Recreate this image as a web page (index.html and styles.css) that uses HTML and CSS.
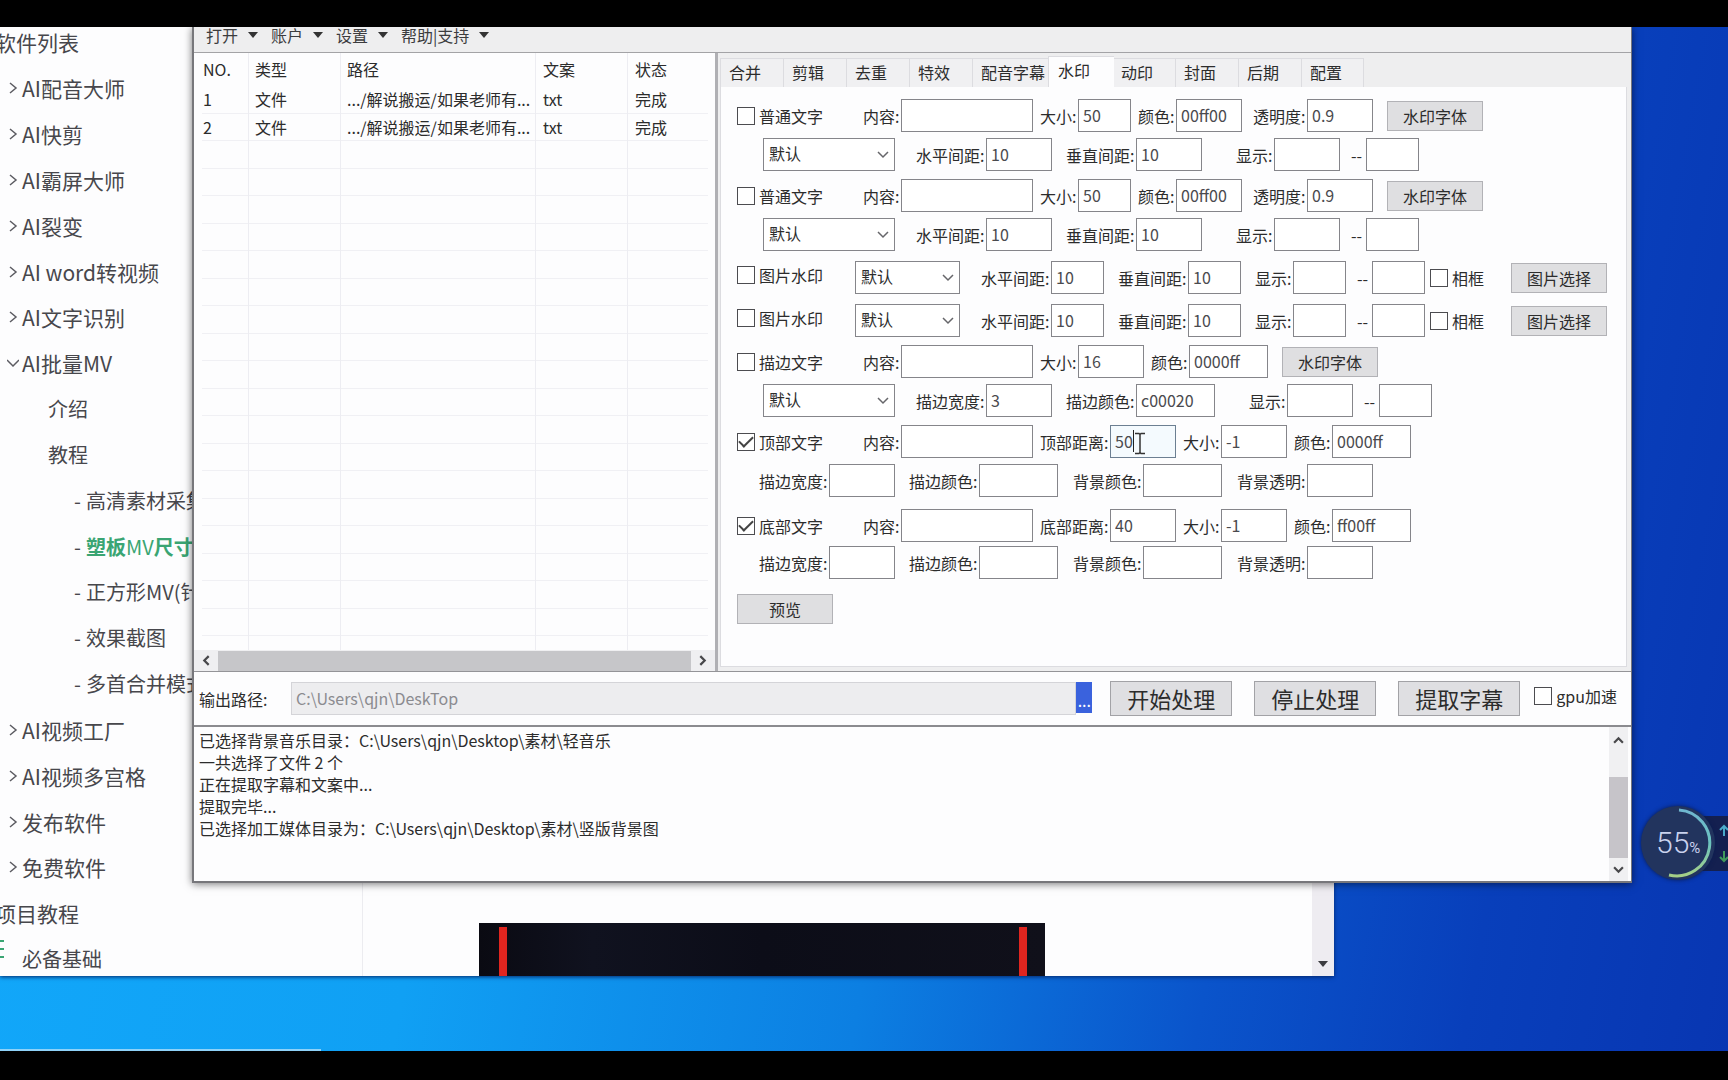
FILE: index.html
```html
<!DOCTYPE html>
<html lang="zh-CN">
<head>
<meta charset="utf-8">
<title>AI批量MV</title>
<link rel="stylesheet" href="styles.css">
</head>
<body>
<main class="desktop">

  <section class="browser">
    <nav class="sidebar">
      <ul class="tree">
        <li class="head first">软件列表</li>
        <li class="group"><svg class="chev" viewBox="0 0 12 12"><path d="M3 1l6 5-6 5"/></svg><a href="#">AI配音大师</a></li>
        <li class="group"><svg class="chev" viewBox="0 0 12 12"><path d="M3 1l6 5-6 5"/></svg><a href="#">AI快剪</a></li>
        <li class="group"><svg class="chev" viewBox="0 0 12 12"><path d="M3 1l6 5-6 5"/></svg><a href="#">AI霸屏大师</a></li>
        <li class="group"><svg class="chev" viewBox="0 0 12 12"><path d="M3 1l6 5-6 5"/></svg><a href="#">AI裂变</a></li>
        <li class="group"><svg class="chev" viewBox="0 0 12 12"><path d="M3 1l6 5-6 5"/></svg><a href="#">AI word转视频</a></li>
        <li class="group"><svg class="chev" viewBox="0 0 12 12"><path d="M3 1l6 5-6 5"/></svg><a href="#">AI文字识别</a></li>
        <li class="group"><svg class="chev" viewBox="0 0 12 12"><path d="M0 3l6 6 6-6"/></svg><a href="#">AI批量MV</a></li>
        <li class="sub"><a href="#">介绍</a></li>
        <li class="sub"><a href="#">教程</a></li>
        <li class="leaf">-<a href="#">高清素材采集</a></li>
        <li class="leaf current">-<a href="#">塑板<span>MV</span>尺寸</a></li>
        <li class="leaf">-<a href="#">正方形MV(针对</a></li>
        <li class="leaf">-<a href="#">效果截图</a></li>
        <li class="leaf">-<a href="#">多首合并模式</a></li>
        <li class="group"><svg class="chev" viewBox="0 0 12 12"><path d="M3 1l6 5-6 5"/></svg><a href="#">AI视频工厂</a></li>
        <li class="group"><svg class="chev" viewBox="0 0 12 12"><path d="M3 1l6 5-6 5"/></svg><a href="#">AI视频多宫格</a></li>
        <li class="group"><svg class="chev" viewBox="0 0 12 12"><path d="M3 1l6 5-6 5"/></svg><a href="#">发布软件</a></li>
        <li class="group"><svg class="chev" viewBox="0 0 12 12"><path d="M3 1l6 5-6 5"/></svg><a href="#">免费软件</a></li>
        <li class="head">项目教程</li>
        <li class="basics"><svg class="bars" viewBox="0 0 4 20"><path d="M0 2h4M0 10h4M0 18h4"/></svg><a href="#">必备基础</a></li>
      </ul>
    </nav>
    <div class="article"><div class="video"></div></div>
    <div class="page-scroll"><svg viewBox="0 0 10 6"><path d="M0 0h10L5 6z"/></svg></div>
  </section>

  <section class="app">
    <header class="menu">
      <button type="button">打开<i></i></button>
      <button type="button">账户<i></i></button>
      <button type="button">设置<i></i></button>
      <button type="button">帮助|支持<i></i></button>
    </header>

    <div class="work">
      <div class="files">
        <div class="files-body">
          <table>
            <colgroup><col class="c-no"><col class="c-type"><col class="c-path"><col class="c-text"><col></colgroup>
            <thead><tr><th>NO.</th><th>类型</th><th>路径</th><th>文案</th><th>状态</th></tr></thead>
            <tbody>
              <tr><td>1</td><td>文件</td><td>.../解说搬运/如果老师有...</td><td>txt</td><td>完成</td></tr>
              <tr><td>2</td><td>文件</td><td>.../解说搬运/如果老师有...</td><td>txt</td><td>完成</td></tr>
            </tbody>
          </table>
        </div>
        <div class="hscroll">
          <svg viewBox="0 0 10 10"><path d="M7 1L3 5l4 4"/></svg>
          <div class="thumb"></div>
          <svg viewBox="0 0 10 10"><path d="M3 1l4 4-4 4"/></svg>
        </div>
      </div>

      <div class="settings">
        <div class="tabs" role="tablist">
          <button type="button" role="tab">合并</button>
          <button type="button" role="tab">剪辑</button>
          <button type="button" role="tab">去重</button>
          <button type="button" role="tab">特效</button>
          <button type="button" role="tab" class="wide">配音字幕</button>
          <button type="button" role="tab" class="active" aria-selected="true">水印</button>
          <button type="button" role="tab">动印</button>
          <button type="button" role="tab">封面</button>
          <button type="button" role="tab">后期</button>
          <button type="button" role="tab">配置</button>
        </div>

        <form class="panel">
          <div class="block">
            <div class="row">
              <label class="check name"><input type="checkbox"><span>普通文字</span></label>
              <label class="field n2"><span>内容:</span><input class="w132" type="text"></label>
              <label class="field n2 g7"><span>大小:</span><input class="w53" type="text" value="50"></label>
              <label class="field n2 g7"><span>颜色:</span><input class="w66" type="text" value="00ff00"></label>
              <label class="field n3 g11"><span>透明度:</span><input class="w66" type="text" value="0.9"></label>
              <button class="btn g14" type="button">水印字体</button>
            </div>
            <div class="row in26">
              <span class="select w132"><select aria-label="位置"><option>默认</option></select><svg viewBox="0 0 12 8"><path d="M1 1l5 5 5-5"/></svg></span>
              <label class="field n4 g21"><span>水平间距:</span><input class="w66" type="text" value="10"></label>
              <label class="field n4 g14"><span>垂直间距:</span><input class="w66" type="text" value="10"></label>
              <label class="field n2 g34"><span>显示:</span><input class="w66" type="text"></label>
              <label class="field to"><span>--</span><input class="w53" type="text"></label>
            </div>
          </div>

          <div class="block">
            <div class="row">
              <label class="check name"><input type="checkbox"><span>普通文字</span></label>
              <label class="field n2"><span>内容:</span><input class="w132" type="text"></label>
              <label class="field n2 g7"><span>大小:</span><input class="w53" type="text" value="50"></label>
              <label class="field n2 g7"><span>颜色:</span><input class="w66" type="text" value="00ff00"></label>
              <label class="field n3 g11"><span>透明度:</span><input class="w66" type="text" value="0.9"></label>
              <button class="btn g14" type="button">水印字体</button>
            </div>
            <div class="row in26">
              <span class="select w132"><select aria-label="位置"><option>默认</option></select><svg viewBox="0 0 12 8"><path d="M1 1l5 5 5-5"/></svg></span>
              <label class="field n4 g21"><span>水平间距:</span><input class="w66" type="text" value="10"></label>
              <label class="field n4 g14"><span>垂直间距:</span><input class="w66" type="text" value="10"></label>
              <label class="field n2 g34"><span>显示:</span><input class="w66" type="text"></label>
              <label class="field to"><span>--</span><input class="w53" type="text"></label>
            </div>
          </div>

          <div class="block images">
            <div class="row">
              <label class="check name"><input type="checkbox"><span>图片水印</span></label>
              <span class="select w105"><select aria-label="位置"><option>默认</option></select><svg viewBox="0 0 12 8"><path d="M1 1l5 5 5-5"/></svg></span>
              <label class="field n4 g21"><span>水平间距:</span><input class="w53" type="text" value="10"></label>
              <label class="field n4 g14"><span>垂直间距:</span><input class="w53" type="text" value="10"></label>
              <label class="field n2 g14"><span>显示:</span><input class="w53" type="text"></label>
              <label class="field to"><span>--</span><input class="w53" type="text"></label>
              <label class="check g5"><input type="checkbox"><span>相框</span></label>
              <button class="btn g27" type="button">图片选择</button>
            </div>
            <div class="row">
              <label class="check name"><input type="checkbox"><span>图片水印</span></label>
              <span class="select w105"><select aria-label="位置"><option>默认</option></select><svg viewBox="0 0 12 8"><path d="M1 1l5 5 5-5"/></svg></span>
              <label class="field n4 g21"><span>水平间距:</span><input class="w53" type="text" value="10"></label>
              <label class="field n4 g14"><span>垂直间距:</span><input class="w53" type="text" value="10"></label>
              <label class="field n2 g14"><span>显示:</span><input class="w53" type="text"></label>
              <label class="field to"><span>--</span><input class="w53" type="text"></label>
              <label class="check g5"><input type="checkbox"><span>相框</span></label>
              <button class="btn g27" type="button">图片选择</button>
            </div>
          </div>

          <div class="block">
            <div class="row">
              <label class="check name"><input type="checkbox"><span>描边文字</span></label>
              <label class="field n2"><span>内容:</span><input class="w132" type="text"></label>
              <label class="field n2 g7"><span>大小:</span><input class="w66" type="text" value="16"></label>
              <label class="field n2 g7"><span>颜色:</span><input class="w79" type="text" value="0000ff"></label>
              <button class="btn g14" type="button">水印字体</button>
            </div>
            <div class="row in26">
              <span class="select w132"><select aria-label="位置"><option>默认</option></select><svg viewBox="0 0 12 8"><path d="M1 1l5 5 5-5"/></svg></span>
              <label class="field n4 g21"><span>描边宽度:</span><input class="w66" type="text" value="3"></label>
              <label class="field n4 g14"><span>描边颜色:</span><input class="w79" type="text" value="c00020"></label>
              <label class="field n2 g34"><span>显示:</span><input class="w66" type="text"></label>
              <label class="field to"><span>--</span><input class="w53" type="text"></label>
            </div>
          </div>

          <div class="block">
            <div class="row">
              <label class="check name"><input type="checkbox" checked><span>顶部文字</span></label>
              <label class="field n2"><span>内容:</span><input class="w132" type="text"></label>
              <label class="field n4 g7 editing"><span>顶部距离:</span><input class="w66" type="text" value="50"><i class="caret"></i><svg class="ibeam" viewBox="0 0 12 22"><path d="M1 1h4l1 1 1-1h4M6 2v18M1 21h4l1-1 1 1h4"/></svg></label>
              <label class="field n2 g7"><span>大小:</span><input class="w66" type="text" value="-1"></label>
              <label class="field n2 g7"><span>颜色:</span><input class="w79" type="text" value="0000ff"></label>
            </div>
            <div class="row in22">
              <label class="field n4"><span>描边宽度:</span><input class="w66" type="text"></label>
              <label class="field n4 g14"><span>描边颜色:</span><input class="w79" type="text"></label>
              <label class="field n4 g15"><span>背景颜色:</span><input class="w79" type="text"></label>
              <label class="field n4 g15"><span>背景透明:</span><input class="w66" type="text"></label>
            </div>
          </div>

          <div class="block bottom">
            <div class="row">
              <label class="check name"><input type="checkbox" checked><span>底部文字</span></label>
              <label class="field n2"><span>内容:</span><input class="w132" type="text"></label>
              <label class="field n4 g7"><span>底部距离:</span><input class="w66" type="text" value="40"></label>
              <label class="field n2 g7"><span>大小:</span><input class="w66" type="text" value="-1"></label>
              <label class="field n2 g7"><span>颜色:</span><input class="w79" type="text" value="ff00ff"></label>
            </div>
            <div class="row in22">
              <label class="field n4"><span>描边宽度:</span><input class="w66" type="text"></label>
              <label class="field n4 g14"><span>描边颜色:</span><input class="w79" type="text"></label>
              <label class="field n4 g15"><span>背景颜色:</span><input class="w79" type="text"></label>
              <label class="field n4 g15"><span>背景透明:</span><input class="w66" type="text"></label>
            </div>
          </div>

          <button class="btn preview" type="button">预览</button>
        </form>
      </div>
    </div>

    <div class="output">
      <label for="out">输出路径:</label>
      <input id="out" type="text" value="C:\Users\qjn\DeskTop" disabled>
      <button class="browse" type="button">...</button>
      <button class="action" type="button">开始处理</button>
      <button class="action" type="button">停止处理</button>
      <button class="action" type="button">提取字幕</button>
      <label class="check"><input type="checkbox"><span>gpu加速</span></label>
    </div>

    <div class="log">
      <div class="lines" role="log">
        <p>已选择背景音乐目录：C:\Users\qjn\Desktop\素材\轻音乐</p>
        <p>一共选择了文件 2 个</p>
        <p>正在提取字幕和文案中...</p>
        <p>提取完毕...</p>
        <p>已选择加工媒体目录为：C:\Users\qjn\Desktop\素材\竖版背景图</p>
      </div>
      <div class="vscroll">
        <svg viewBox="0 0 10 10"><path d="M1 7l4-4 4 4"/></svg>
        <div class="thumb"></div>
        <svg viewBox="0 0 10 10"><path d="M1 3l4 4 4-4"/></svg>
      </div>
    </div>
  </section>

  <aside class="meter">
    <div class="net">
      <svg viewBox="0 0 10 12"><path d="M5 12V2M1 6l4-4 4 4" stroke="#49a9c9"/></svg>
      <svg viewBox="0 0 10 12"><path d="M5 0v10M1 6l4 4 4-4" stroke="#3f9a5c"/></svg>
    </div>
    <div class="dial">
      <svg viewBox="0 0 74 74">
        <defs><linearGradient id="arc" x1="0" y1="0" x2="0" y2="1"><stop offset="0" stop-color="#6fb6d0"/><stop offset=".5" stop-color="#6cc3bf"/><stop offset="1" stop-color="#a5cf86"/></linearGradient></defs>
        <path d="M38 4A33 33 0 1 1 28 69" fill="none" stroke="url(#arc)" stroke-width="3"/>
      </svg>
      <span>55<small>%</small></span>
    </div>
  </aside>

  <div class="task-line"></div>
</main>
</body>
</html>
```
FILE: styles.css
```css
* { box-sizing: border-box; }

body {
  margin: 0;
  min-height: 100vh;
  padding: 27px 0 29px;
  display: flex;
  background: #000;
  color: #2c2c2c;
  font: 16px/22px "Noto Sans CJK SC", sans-serif;
}

button, input, select { font: inherit; color: inherit; margin: 0; border-radius: 0; }
button { cursor: default; }
a { color: inherit; text-decoration: none; }
svg { display: block; fill: none; flex: none; }

.desktop {
  position: relative;
  flex: 1;
  overflow: hidden;
  background: linear-gradient(100deg, #12a9fb 0%, #10a0f4 30%, #0c7fe2 54%, #0a54cb 72%, #083fbb 86%, #0836b2 100%);
}

/* Browser window behind the tool */
.browser {
  position: absolute;
  inset: 0 394px 75px 0;
  display: flex;
  overflow: hidden;
  background: #fdfdfe;
  box-shadow: 0 1px 4px #04286a;
}
.sidebar { width: 363px; border-right: 1px solid #ececf0; overflow: hidden; }
.tree { list-style: none; margin: 0; padding: 0; color: #47474c; }
.tree li { display: flex; align-items: center; height: 46px; white-space: nowrap; font-size: 20px; }
.tree li:nth-child(6n) { height: 45px; }
.tree .head { font-size: 21px; text-indent: -5px; }
.tree .first { height: 38px; padding-bottom: 8px; }
.tree .group { font-size: 21px; padding-left: 7px; gap: 3px; }
.chev { width: 12px; height: 12px; stroke: #5c5c62; stroke-width: 1.5; }
.tree .sub { padding-left: 48px; }
.tree .leaf { padding-left: 74px; gap: 5px; }
.tree .current a { color: #3aa573; font-weight: 700; }
.tree .current span { font-weight: 400; }
.tree .basics { gap: 18px; }
.bars { width: 4px; height: 20px; margin-bottom: 20px; stroke: #3aa573; stroke-width: 2; }

.article { flex: 1; display: flex; align-items: flex-end; }
.video {
  width: 566px;
  height: 53px;
  margin-left: 116px;
  background:
    linear-gradient(#e0251f, #e0251f) 20px 4px / 8px 50px no-repeat,
    linear-gradient(#e0251f, #e0251f) 540px 4px / 8px 50px no-repeat,
    linear-gradient(90deg, #0a0a12, #10121f 20%, #0c0d18 50%, #10101a);
}
.page-scroll { width: 22px; background: #eeecf1; display: flex; align-items: flex-end; justify-content: center; padding-bottom: 9px; }
.page-scroll svg { width: 10px; height: 6px; fill: #3c3c40; }

/* Tool window */
.app {
  position: absolute;
  inset: 0 96px auto 192px;
  background: #fdfdfe;
  border: solid #77777b;
  border-width: 0 1px 2px 2px;
  box-shadow: 0 1px 8px #0008;
}
.menu { display: flex; align-items: center; gap: 12px; height: 26px; padding: 0 0 10px 12px; background: #eeeeef; border-bottom: 1px solid #a3a3a6; }
.menu button { display: flex; align-items: center; gap: 10px; padding: 0; border: 0; background: none; color: #3c3c3e; }
.menu i { border: 5px solid transparent; border-top: 6px solid #333; border-bottom: 0; margin-right: 1px; }

.work { display: flex; border-bottom: 1px solid #949498; }
.files { width: 524px; display: flex; flex-direction: column; border-right: 3px solid #b0b0b4; }
.files-body {
  flex: 1;
  background:
    linear-gradient(#ededf2, #ededf2) 54px 0 / 1px 100% no-repeat,
    linear-gradient(#ededf2, #ededf2) 146px 0 / 1px 100% no-repeat,
    linear-gradient(#ededf2, #ededf2) 341px 0 / 1px 100% no-repeat,
    linear-gradient(#ededf2, #ededf2) 433px 0 / 1px 100% no-repeat,
    repeating-linear-gradient(#0000 0 27px, #f0f0f4 27px 28px, #0000 28px 54px, #f0f0f4 54px 55px) 8px 33px / 506px 563px no-repeat;
}
table { width: 100%; table-layout: fixed; border-collapse: collapse; }
th, td { padding: 0 0 2px 7px; text-align: left; font-weight: 400; white-space: nowrap; }
th:first-child, td:first-child { padding-left: 9px; }
th { height: 33px; }
td { height: 28px; }
.c-no { width: 54px; }
.c-type { width: 92px; }
.c-path { width: 196px; }
.c-text { width: 92px; }

.hscroll { display: flex; align-items: center; gap: 6px; height: 21px; padding: 0 7px; background: #efeff1; }
.hscroll .thumb { flex: 1; height: 20px; background: #c6c6c9; }
.hscroll svg, .vscroll svg { width: 11px; height: 11px; stroke: #48484b; stroke-width: 2; }

.settings { flex: 1; min-width: 0; background: #eeeeef; padding: 5px 4px 4px 2px; }
.tabs { display: flex; height: 29px; }
.tabs button { width: 63px; padding: 0 0 2px 8px; text-align: left; border: 1px solid #dcdce0; border-width: 1px 0 0 1px; background: #f0f0f2; }
.tabs button:last-child { border-right-width: 1px; }
.tabs .wide { width: 78px; }
.tabs .active { width: 66px; margin: -2px -2px 0; padding: 0 0 5px 9px; background: #fdfdfe; position: relative; }

.panel {
  display: flex;
  flex-direction: column;
  gap: 8px;
  padding: 12px 0 42px 16px;
  background: #fdfdfe;
  border: 1px solid #dcdce0;
  border-top: 0;
}
.block { display: flex; flex-direction: column; gap: 6px; }
.images { gap: 10px; margin-top: 2px; }
.bottom { gap: 4px; margin-top: 4px; }
.row { display: flex; align-items: center; height: 33px; white-space: nowrap; }
.in26 { padding-left: 26px; }
.in22 { padding-left: 22px; }

.check { display: flex; align-items: center; gap: 4px; }
.check input { appearance: none; width: 18px; height: 18px; border: 1px solid #4c4c50; background: #fff; display: grid; place-items: center; }
.check input:checked::before { content: ""; width: 12px; height: 6px; border: solid #444; border-width: 0 0 2px 2px; rotate: -45deg; translate: 0 -2px; }
.name { width: 126px; }
.images .name { width: 118px; padding-bottom: 5px; }

.field { display: flex; align-items: center; }
.field span { text-align: right; padding-right: 2px; }
.n2 span { width: 38px; }
.n3 span { width: 54px; }
.n4 span { width: 70px; }
.field.to span { width: 26px; padding-right: 4px; }
.field input { height: 33px; padding: 0 0 2px 4px; border: 1px solid #85858a; background: #fff; color: #4a4a4e; outline: 0; }
.w53 { width: 53px; }
.w66 { width: 66px; }
.w79 { width: 79px; }
.w105 { width: 105px; }
.w132 { width: 132px; }
.g5 { margin-left: 5px; }
.g7 { margin-left: 7px; }
.g11 { margin-left: 11px; }
.g14 { margin-left: 14px; }
.g15 { margin-left: 15px; }
.g21 { margin-left: 21px; }
.g27 { margin-left: 27px; }
.g34 { margin-left: 34px; }

.editing { position: relative; }
.editing input { background: #f4fafe; border-color: #6c7f92; }
.caret { position: absolute; left: 93px; top: 5px; width: 1px; height: 22px; background: #222; }
.ibeam { position: absolute; left: 94px; top: 7px; width: 12px; height: 23px; stroke: #333; stroke-width: 1.5; }

.select { position: relative; }
.select select { appearance: none; display: block; width: 100%; height: 33px; padding: 0 0 3px 5px; border: 1px solid #85858a; background: #fff; }
.select svg { position: absolute; right: 6px; top: 13px; width: 12px; height: 8px; stroke: #66666a; stroke-width: 1.5; pointer-events: none; }

.btn { width: 96px; height: 30px; padding: 0; border: 1px solid #b2b2b6; background: #dfdfe1; }
.preview { margin-top: 7px; }

.output { display: flex; align-items: center; height: 53px; padding: 0 14px 0 5px; }
.output > label:first-child { width: 92px; }
.output > input { flex: 1; min-width: 0; height: 33px; padding: 0 0 2px 4px; border: 1px solid #d4d4d8; background: #ededef; color: #8b8b8f; }
.browse { width: 16px; height: 31px; padding: 4px 0 0; margin: 0 18px 2px 0; border: 0; background: #3a62dd; color: #fff; line-height: 16px; }
.action { width: 122px; height: 35px; padding: 0 0 2px; margin-right: 22px; border: 1px solid #a2a2a6; background: #dfdfe2; font-size: 22px; line-height: 30px; }
.output .check { margin-left: -8px; padding-bottom: 5px; }

.log { display: flex; height: 156px; border-top: 2px solid #8b8b8f; }
.lines { flex: 1; padding: 2px 5px; }
.lines p { margin: 0; }
.vscroll { width: 19px; margin-right: 3px; padding: 8px 0 6px; display: flex; flex-direction: column; align-items: center; background: #f0f0f2; }
.vscroll .thumb { width: 19px; height: 81px; margin: auto 0 6px; background: #c6c4c9; }

/* Floating resource meter */
.meter { position: absolute; right: 0; top: 779px; width: 87px; height: 74px; }
.net { position: absolute; right: 0; top: 10px; width: 30px; height: 55px; background: #142050; display: flex; flex-direction: column; align-items: flex-end; justify-content: space-around; margin-right: -1px; }
.net svg { width: 10px; height: 12px; stroke-width: 2; }
.dial { position: absolute; left: 0; top: 0; width: 74px; height: 74px; border-radius: 50%; background: #22345e; box-shadow: 0 0 4px #0a1c50; }
.dial span { position: absolute; left: 15px; top: 20px; font: 300 30px/34px Roboto, sans-serif; color: #c9d2ee; white-space: nowrap; }
.dial small { font-size: 15px; font-weight: 400; }

.task-line { position: absolute; left: 0; bottom: 0; width: 321px; height: 2px; background: #8fd2f8; }
```
